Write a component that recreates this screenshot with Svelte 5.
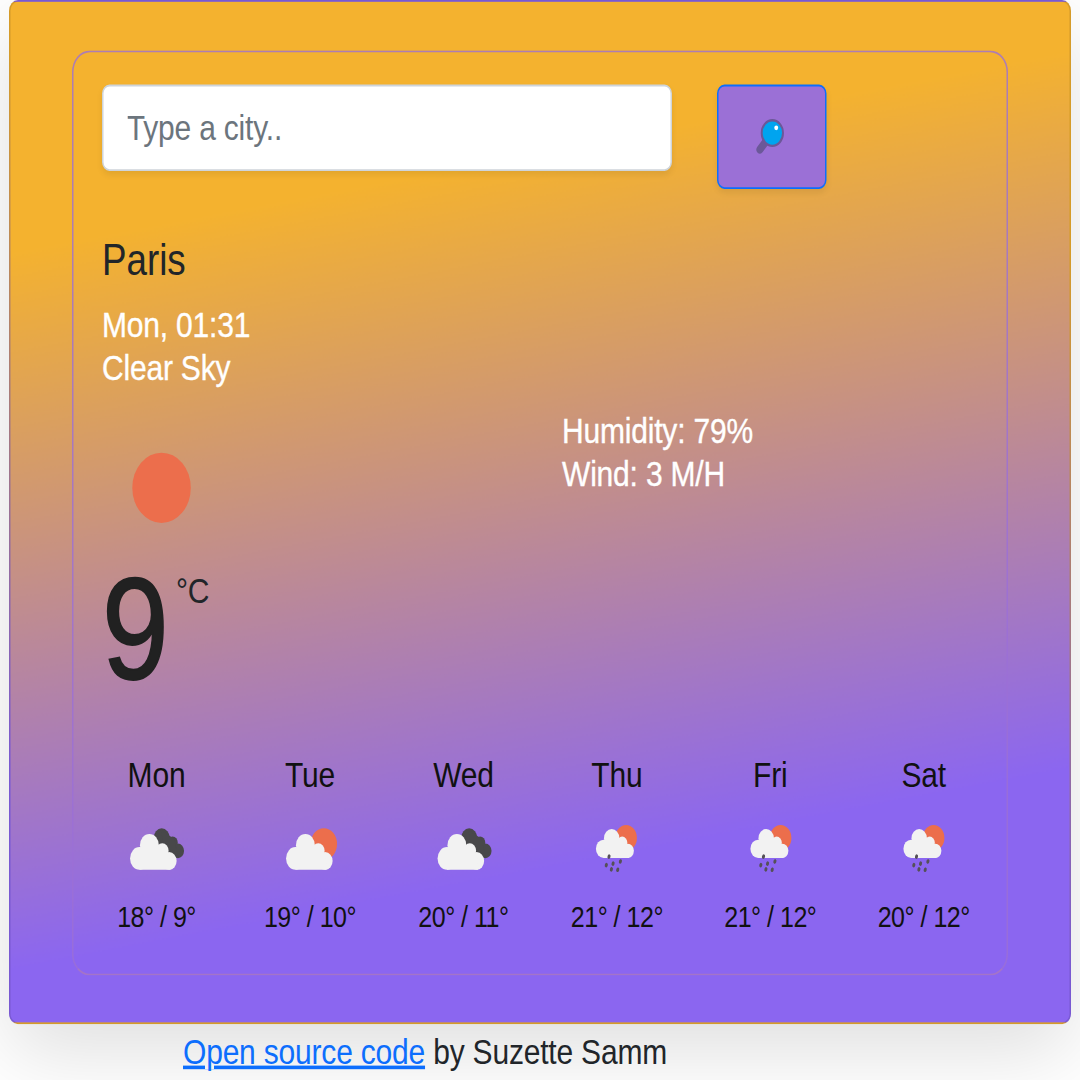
<script>
  const forecast = [
    { day: 'Mon', icon: 'clouds', max: 18, min: 9 },
    { day: 'Tue', icon: 'sun', max: 19, min: 10 },
    { day: 'Wed', icon: 'clouds', max: 20, min: 11 },
    { day: 'Thu', icon: 'rain', max: 21, min: 12 },
    { day: 'Fri', icon: 'rain', max: 21, min: 12 },
    { day: 'Sat', icon: 'rain', max: 20, min: 12 }
  ];
  const drops = [[20, 28.9], [18.2, 33.6], [22.7, 32.8], [27.6, 31.6], [21.6, 36], [25.8, 36.2]];
</script>

{#snippet cloud()}
  <g fill="#f2f2f2">
    <circle cx="20.6" cy="22.6" r="6.3" />
    <circle cx="14" cy="29.9" r="6.3" />
    <circle cx="29.2" cy="25.7" r="4.2" />
    <circle cx="33.8" cy="31.3" r="4.95" />
    <path d="M14 36.2V25l1.5-2.5 5.100-2 5.400 1 2 3 6 4 .8 7.700z" />
  </g>
{/snippet}

<div class="page">
  <main class="card">
    <section class="panel">
      <form class="search" onsubmit={(e) => e.preventDefault()}>
        <input type="text" placeholder="Type a city.." />
        <button type="submit" aria-label="Search">
          <svg width="24" height="24" viewBox="0 0 24 24">
            <path d="M9.200 15 5.600 19.100" stroke="#6b5899" stroke-width="4.600" stroke-linecap="round" />
            <circle cx="13.9" cy="9.9" r="7.1" fill="#00a4ef" stroke="#6b5899" stroke-width="1.3" />
            <circle cx="16.500" cy="7" r="1.3" fill="#fff" />
          </svg>
        </button>
      </form>

      <h1>Paris</h1>
      <div class="current">
        <div class="left">
          <div class="line">Mon, 01:31</div>
          <div class="line">Clear Sky</div>
          <svg class="now" width="80" height="80" viewBox="0 0 80 80">
            <circle cx="39.7" cy="40" r="19.5" fill="#ec6e4c" />
          </svg>
          <div class="temp"><span class="value">9</span><span class="unit">°C</span></div>
        </div>
        <div class="right">
          <div class="line">Humidity: 79%</div>
          <div class="line">Wind: 3 M/H</div>
        </div>
      </div>

      <div class="forecast">
        {#each forecast as f}
          <div class="day">
            <div class="name">{f.day}</div>
            <svg width="50" height="50" viewBox="0 0 50 50">
              {#if f.icon === 'clouds'}
                <g fill="#48484a">
                  <circle cx="28.8" cy="18.6" r="5.4" />
                  <circle cx="36.1" cy="21.1" r="3.4" />
                  <circle cx="39.6" cy="25.7" r="4.1" />
                  <path d="M28 14l9 5 3 10.7h-8z" />
                </g>
                {@render cloud()}
              {:else if f.icon === 'sun'}
                <circle cx="33.9" cy="21.9" r="8.8" fill="#ec6e4c" />
                <g transform="translate(1 0)">{@render cloud()}</g>
              {:else}
                <circle cx="31.4" cy="18.5" r="7.2" fill="#ec6e4c" />
                <g transform="translate(5 .4) scale(.815 .808)">{@render cloud()}</g>
                {#each drops as [x, y]}
                  <ellipse cx={x} cy={y} rx="1" ry="1.3" fill="#555058" transform="rotate(20 {x} {y})" />
                {/each}
              {/if}
            </svg>
            <div class="range">{f.max}° / {f.min}°</div>
          </div>
        {/each}
      </div>
    </section>
  </main>
  <footer><a href="#source">Open source code</a> by Suzette Samm</footer>
</div>

<style>
  :global(body) {
    margin: 0;
    background: #fff;
    overflow: hidden;
  }
  :global(#app) {
    width: 1080px;
    height: 1080px;
    overflow: hidden;
  }
  .page, .page * {
    box-sizing: border-box;
  }
  .page {
    display: flow-root;
    width: 720px;
    height: 600px;
    transform: scale(1.5, 1.8);
    transform-origin: 0 0;
    font: 20px/24px 'Liberation Sans', Arial, sans-serif;
    letter-spacing: -0.13px;
    color: #212529;
  }
  .card {
    width: 708px;
    height: 569.4px;
    margin: 0 6px;
    padding: 26.6px 41px 0;
    border: 1px solid rgba(0, 0, 0, 0.125);
    border-radius: 6px;
    background: linear-gradient(171deg, #f4b22f 20.5%, #8b66f0 79.3%);
    box-shadow: 0 16px 48px rgba(0, 0, 0, 0.125);
  }
  .panel {
    height: 514.4px;
    padding: 18.8px 4px 0 19px;
    border: 1px solid rgba(155, 112, 214, 0.8);
    border-bottom-color: rgba(190, 130, 160, 0.5);
    border-radius: 12px;
  }
  .search {
    display: flex;
    align-items: flex-start;
    gap: 30px;
    height: 57.4px;
  }
  input {
    width: 379.5px;
    height: 47.6px;
    padding: 1px 15.5px 0;
    border: 1px solid #ced4da;
    border-radius: 5px;
    background: #fff;
    font: inherit;
    letter-spacing: inherit;
    box-shadow: 0 2px 4px rgba(0, 0, 0, 0.075);
  }
  input::placeholder {
    color: #6c757d;
    opacity: 1;
  }
  button {
    display: flex;
    align-items: center;
    justify-content: center;
    width: 73px;
    height: 57.4px;
    padding: 0 2px 0 0;
    border: 1px solid #0d6efd;
    border-radius: 5px;
    background: #9b70d6;
    box-shadow: 0 2px 4px rgba(0, 0, 0, 0.075);
  }
  svg {
    display: block;
    fill: none;
  }
  h1 {
    margin: 25.7px 0 8px;
    font-size: 24.5px;
    line-height: 29.4px;
    font-weight: 400;
    letter-spacing: 0;
  }
  .current {
    display: grid;
    grid-template-columns: 306.7px 1fr;
    height: 250px;
  }
  .line {
    color: #fff;
    -webkit-text-stroke: 0.2px #fff;
  }
  .right {
    padding-top: 59.6px;
  }
  .now {
    margin-top: 14.7px;
  }
  .temp {
    display: flex;
    align-items: flex-start;
    gap: 5px;
    margin-top: -8.6px;
  }
  .value {
    font-size: 80px;
    line-height: 96px;
    color: #212121;
    -webkit-text-stroke: 1px #212121;
  }
  .unit {
    margin-top: 14px;
  }
  .forecast {
    display: grid;
    grid-template-columns: repeat(6, 102.3px);
    margin-left: -14.8px;
    color: #111;
  }
  .day {
    display: flex;
    flex-direction: column;
    align-items: center;
  }
  .day svg {
    margin: 5px 0 1px;
  }
  .range {
    font-size: 16.7px;
    letter-spacing: -0.33px;
  }
  footer {
    margin: 2.2px 0 0 122px;
  }
  a {
    color: #0d6efd;
    text-decoration: underline;
  }
</style>
